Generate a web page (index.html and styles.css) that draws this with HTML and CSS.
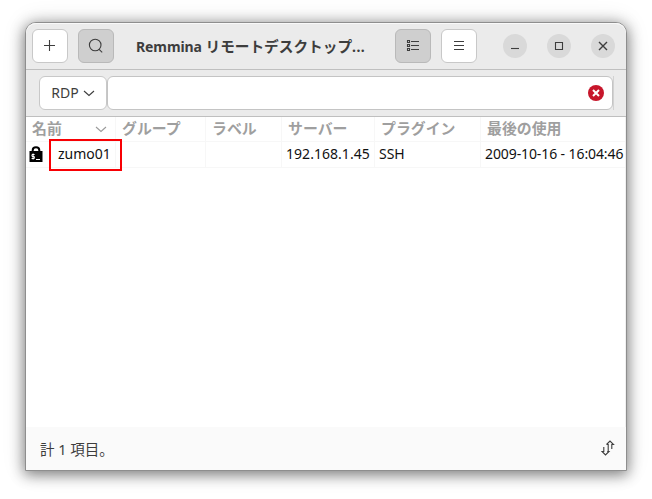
FILE: index.html
```html
<!DOCTYPE html>
<html lang="ja">
<head>
<meta charset="utf-8">
<title>Remmina</title>
<link rel="stylesheet" href="styles.css">
</head>
<body>
<main class="window">
  <header class="titlebar">
    <button class="btn"><svg width="16" height="16" viewBox="0 0 16 16"><path d="M7.5 2v11M2 7.5h11"/></svg></button>
    <button class="btn pressed search-btn"><svg width="16" height="16" viewBox="0 0 16 16"><circle cx="7.2" cy="7" r="5.8"/><path d="M10.8 11.2l3.4 3.1"/></svg></button>
    <h1 class="title"><span class="latin">Remmina</span> <span class="jp">リモートデスクトップ</span><span class="dots">...</span></h1>
    <button class="btn pressed list-btn"><svg width="16" height="16" viewBox="0 0 16 16"><path d="M2.5 2.5h2v2h-2zM2.5 6.5h2v2h-2zM2.5 10.5h2v2h-2zM6 3.5h8M6 7.5h8M6 11.5h8"/></svg></button>
    <button class="btn menu-btn"><svg width="16" height="16" viewBox="0 0 16 16"><path d="M3 3.5h10M3 7.5h10M3 11.5h10"/></svg></button>
    <div class="controls">
      <button class="round"><svg width="16" height="16" viewBox="0 0 16 16"><path d="M4 10.5h8"/></svg></button>
      <button class="round"><svg width="16" height="16" viewBox="0 0 16 16"><path d="M4.5 4.5h7v7h-7z"/></svg></button>
      <button class="round"><svg width="16" height="16" viewBox="0 0 16 16"><path d="M4 4l8 8M12 4l-8 8" stroke-width="1.4"/></svg></button>
    </div>
  </header>
  <section class="toolbar">
    <button class="protocol"><span>RDP</span><svg width="12" height="8" viewBox="0 0 12 8"><path d="M1 2l5 4.5L11 2"/></svg></button>
    <div class="entry"><svg width="16" height="16" viewBox="0 0 16 16"><circle class="clear-bg" cx="8" cy="8" r="8"/><path class="clear-x" d="M5 5l6 6M11 5l-6 6"/></svg></div>
    <i class="edge"></i>
  </section>
  <section class="list">
    <div class="row head">
      <div class="name">名前<svg width="12" height="8" viewBox="0 0 12 8"><path d="M1 2l5 4.5L11 2"/></svg></div>
      <div>グループ</div><div>ラベル</div><div>サーバー</div><div>プラグイン</div><div>最後の使用</div>
    </div>
    <div class="row item">
      <div class="host"><svg class="lock" width="14" height="16" viewBox="0 0 14 16"><path class="shackle" d="M3.7 6V4.3C3.7 .3 10.3 .3 10.3 4.3V6"/><path class="lock-body" d="M.5 5h13v11H.5z"/><path class="prompt" d="M5.6 8.5H3v2h2.3v2H2.6M4.1 7.5v6M7 13.5h4"/></svg><span>zumo01</span><i class="highlight"></i></div>
      <div></div><div></div><div class="ip"><span>192.168.1.45</span></div><div class="ssh"><span>SSH</span></div><div class="date"><span>2009-10-16 - 16:04:46</span></div>
    </div>
  </section>
  <footer class="status"><span>計 1 項目。</span><svg width="14" height="16" viewBox="0 0 14 16"><path d="M5.5 4.5L9 1l3.5 3.5h-1.7V9M5.5 4.5h1.7V11M2.8 7v4.5H1L4.5 15 8 11.5H6.2"/></svg></footer>
</main>
</body>
</html>
```
FILE: styles.css
```css
* { box-sizing: border-box; }
body {
  margin: 0;
  width: 652px;
  height: 499px;
  padding: 22px 25px 28px;
  overflow: hidden;
  background: #fff;
  color: #3d3d3d;
  font-family: "Noto Sans", "Noto Sans CJK JP", sans-serif;
  font-size: 14px;
}
.window {
  width: 602px;
  height: 449px;
  border: 1px solid #8e8e8e;
  border-radius: 11px 11px 0 0;
  background: #fff;
  box-shadow: 0 3px 14px 1px rgba(0,0,0,.46), 0 0 24px rgba(0,0,0,.12);
  display: flex;
  flex-direction: column;
}
svg { display: block; flex: none; fill: none; stroke: #3d3d3d; stroke-width: 1.1; }
button { margin: 0; padding: 0; font: inherit; color: inherit; }
.titlebar {
  height: 47px;
  flex: none;
  display: flex;
  align-items: center;
  padding: 0 11px 0 6px;
  background: #ebebeb;
  border-bottom: 1px solid #bfbfbf;
  border-radius: 10px 10px 0 0;
  box-shadow: inset 0 1px #f9f9f9;
}
.btn {
  width: 36px;
  height: 34px;
  flex: none;
  display: grid;
  place-items: center;
  border: 1px solid #c8c8c8;
  border-radius: 6px;
  background: #fff;
}
.pressed { background: #cfcfcf; border-color: #b9b9b9; }
.search-btn, .menu-btn { margin-left: 10px; }
.title {
  width: 259px;
  margin: 0 0 0 22px;
  flex: none;
  font-size: 14px;
  line-height: 20px;
  white-space: nowrap;
}
.latin { letter-spacing: -.1px; }
.jp { font-size: 14.67px; }
.dots { letter-spacing: .4px; }
.controls { margin-left: auto; display: flex; gap: 20px; }
.round {
  width: 24px;
  height: 24px;
  display: grid;
  place-items: center;
  border: 0;
  border-radius: 50%;
  background: #d9d9d9;
}
.toolbar {
  height: 47px;
  flex: none;
  display: flex;
  align-items: center;
  padding: 0 12px 0 13px;
  background: #ebebeb;
  border-bottom: 1px solid #bfbfbf;
}
.protocol {
  width: 68px;
  height: 34px;
  display: flex;
  align-items: center;
  justify-content: center;
  gap: 4px;
  padding-bottom: 1px;
  border: 1px solid #c8c8c8;
  border-radius: 6px;
  background: #fff;
}
.entry {
  flex: 1;
  height: 34px;
  display: flex;
  align-items: center;
  justify-content: flex-end;
  padding-right: 8px;
  border: 1px solid #c4c4c4;
  border-radius: 6px;
  background: #fff;
}
.edge { width: 1px; height: 34px; background: #d2d2d2; }
.clear-bg { fill: #c7162b; stroke: none; }
.clear-x { stroke: #fff; stroke-width: 2; }
.list { height: 310px; flex: none; border-right: 1px solid #f0f0f0; }
.row {
  display: grid;
  grid-template-columns: 90px 90px 76px 93px 106px 1fr;
  white-space: nowrap;
}
.row > div {
  display: flex;
  align-items: center;
  padding-left: 6px;
  border-right: 1px solid #f7f7f7;
  border-bottom: 1px solid #f7f7f7;
}
.row > div:last-child { border-right: 0; }
.head { height: 25px; color: #9f9f9f; font-size: 14.9px; line-height: 20px; font-weight: 700; }
.head > div { padding-bottom: 2px; }
.head svg { stroke: #9b9b9b; margin-top: 2px; }
.head .name { justify-content: space-between; padding-right: 8px; }
.item { height: 26px; color: #111; }
.item span { padding-bottom: 2px; }
.row .host { position: relative; padding-left: 3px; }
.lock { margin-bottom: 1px; }
.host span { margin-left: 15px; }
.highlight {
  position: absolute;
  left: 23px;
  top: -3px;
  width: 73px;
  height: 32px;
  border: 2px solid #f80004;
}
.shackle { stroke: #000; stroke-width: 2; }
.lock-body { fill: #000; stroke: none; }
.prompt { stroke: #fff; stroke-width: 1; }
.row .ip, .row .ssh, .row .date { padding-left: 4px; }
.ip { letter-spacing: .04px; }
.date { letter-spacing: -.1px; }
.status {
  flex: 1;
  display: flex;
  align-items: center;
  justify-content: space-between;
  padding: 0 12px 0 14px;
  background: #fafafa;
}
.status span { padding-bottom: 1px; font-size: 14.5px; }
.status svg { margin-right: -1px; margin-bottom: 1px; }
```
